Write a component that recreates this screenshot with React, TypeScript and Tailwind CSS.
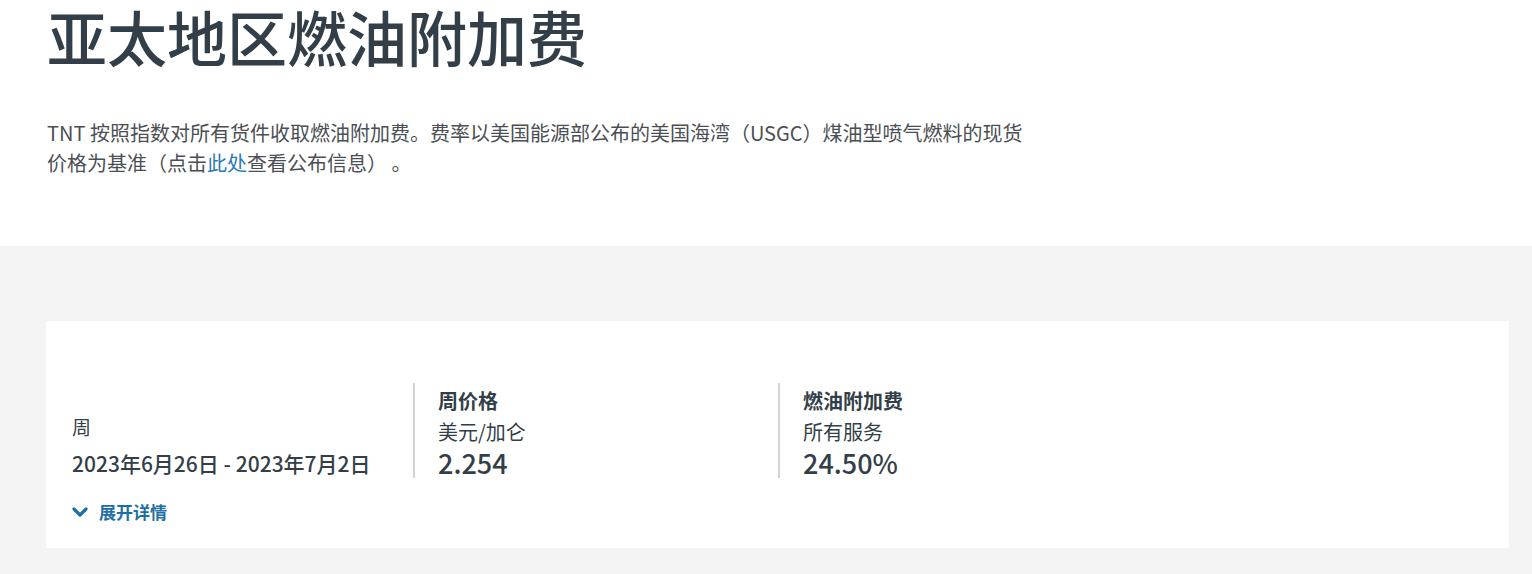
const font = { fontFamily: '"Noto Sans CJK SC", "Noto Sans", sans-serif' };

export default function App() {
  return (
    <div className="min-h-screen bg-white text-[#333f48]" style={font}>
      {/* Intro */}
      <section className="px-[47px] pb-[68px]">
        <h1 className="text-[60px] leading-[72px] font-medium text-[#333f48]">亚太地区燃油附加费</h1>
        <p className="mt-[46px] max-w-[990px] text-[20px] leading-[30px] text-[#4b4f54]">
          TNT 按照指数对所有货件收取燃油附加费。费率以美国能源部公布的美国海湾（USGC）煤油型喷气燃料的现货价格为基准（点击
          <a href="#" className="text-[#2a78b8]">此处</a>
          查看公布信息）&nbsp;。
        </p>
      </section>

      {/* Rates */}
      <section className="bg-[#f4f4f4] pl-[46px] pr-[23px] pt-[75px] pb-[26px]">
        <div className="bg-white pl-[26px] pt-[62px] pb-[24px]">
          <div className="flex">
            <div className="w-[341px] flex flex-col justify-end">
              <p className="text-[19px] leading-[30px] mb-[6px]">周</p>
              <p className="text-[21px] leading-[30px] font-medium">2023年6月26日 - 2023年7月2日</p>
            </div>
            <div className="w-[365px] border-l-2 border-[#d4d4d4] pl-[23px] pt-[3px]">
              <p className="text-[20px] leading-[30px] font-bold">周价格</p>
              <p className="text-[20px] leading-[32px]">美元/加仑</p>
              <p className="text-[27px] leading-[30px] font-medium">2.254</p>
            </div>
            <div className="border-l-2 border-[#d4d4d4] pl-[23px] pt-[3px]">
              <p className="text-[20px] leading-[30px] font-bold">燃油附加费</p>
              <p className="text-[20px] leading-[32px]">所有服务</p>
              <p className="text-[27px] leading-[30px] font-medium">24.50%</p>
            </div>
          </div>
          <button className="mt-[22px] flex items-center gap-[11px] text-[#1d6fa5] font-bold text-[17px] leading-[24px]">
            <svg width="16" height="11" viewBox="0 0 16 11" fill="none">
              <path d="M2 2 L8 8 L14 2" stroke="currentColor" strokeWidth="3.2" strokeLinecap="round" strokeLinejoin="round" />
            </svg>
            展开详情
          </button>
        </div>
      </section>
    </div>
  );
}
